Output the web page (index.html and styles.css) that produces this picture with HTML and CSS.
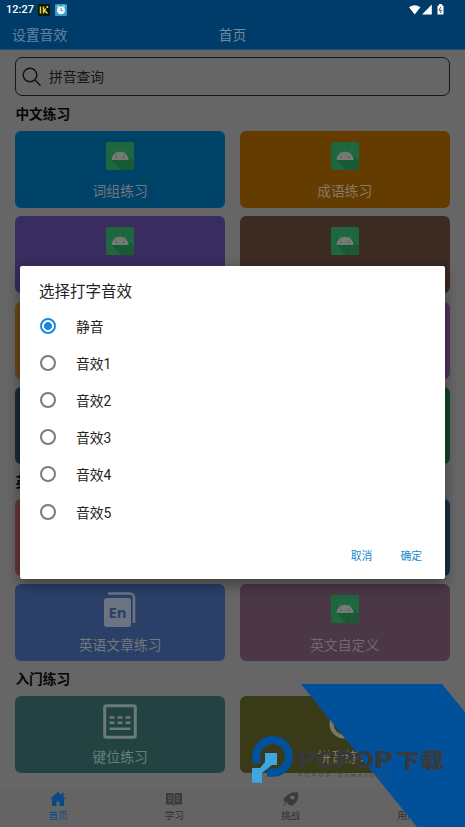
FILE: index.html
```html
<!DOCTYPE html>
<html lang="zh-CN">
<head>
<meta charset="utf-8">
<title>首页</title>
<link rel="stylesheet" href="styles.css">
</head>
<body>
<svg width="0" height="0" class="defs">
  <symbol id="droid" viewBox="0 0 28 28">
    <rect width="28" height="28" rx="1.5" fill="#1d663e"/>
    <path d="M7 0v28M14 0v28M21 0v28M0 7h28M0 14h28M0 21h28" stroke="#256f47" stroke-width=".4"/>
    <path d="M5.5 18 15 28h13V19.500L21 12z" fill="#17552f" opacity=".65"/>
    <path d="M5.500 18a8.600 8.200 0 0 1 17.200 0z" fill="#747b76"/>
    <path d="m8.500 9 2 3m9.200-3-2 3" stroke="#66736b" stroke-width=".8"/>
    <circle cx="10.300" cy="15" r=".8" fill="#356148"/><circle cx="17.800" cy="15" r=".8" fill="#356148"/>
  </symbol>
</svg>
<div class="screen">
  <header class="header">
    <div class="status">
      <span class="clock">12:27</span>
      <svg class="app" viewBox="0 0 12 12"><rect width="12" height="12" rx="1.500" fill="#111408"/><path d="M2.500 2.500v7M5.500 2.500v7M6 6l3.500 3.500M6.500 6 8 4.500" stroke="#d8d83a" stroke-width="1.500"/><circle cx="9.300" cy="3" r="1" fill="#f0e850"/></svg>
      <svg class="app" viewBox="0 0 12 12"><rect width="12" height="12" rx="1" fill="#3a9bcb"/><circle cx="6" cy="6.300" r="4" fill="#eef8fc"/><path d="m2 3 2-1.500M10 3 8 1.500" stroke="#eef8fc"/><path d="M6 4v2.500h2" fill="none" stroke="#3a9bcb" stroke-width=".9"/></svg>
      <svg class="signals" viewBox="0 0 36 12"><path d="M0 3.200Q5.700-.8 11.400 3.200L5.700 10.500zM22.800.5v10H13zM28.500 1.500h1.500V0h3v1.500h1.500v9h-6z" fill="#fff"/><path d="m31.700 3-1.500 3.300h2.500L31.200 9" fill="none" stroke="#27445a" stroke-width=".9"/></svg>
    </div>
    <div class="toolbar"><span class="sound">设置音效</span><span class="title">首页</span></div>
  </header>
  <main class="content">
    <div class="search">
      <svg viewBox="0 0 20 20"><circle cx="8" cy="8" r="6.800"/><path d="m13 13 5.500 5.700"/></svg>
      <span>拼音查询</span>
    </div>
    <h2>中文练习</h2>
    <div class="grid">
      <div class="card sky"><svg class="droid"><use href="#droid"/></svg><span>词组练习</span></div>
      <div class="card amber"><svg class="droid"><use href="#droid"/></svg><span>成语练习</span></div>
      <div class="card violet"><svg class="droid"><use href="#droid"/></svg></div>
      <div class="card brown"><svg class="droid"><use href="#droid"/></svg></div>
      <div class="card gold"></div>
      <div class="card magenta"></div>
      <div class="card slate"></div>
      <div class="card green"></div>
    </div>
    <h2>英文练习</h2>
    <div class="grid">
      <div class="card red"></div>
      <div class="card navy"></div>
      <div class="card blue low">
        <svg class="glyph" viewBox="0 0 34 36"><path d="M5 1.500h22a4 4 0 0 1 4 4V31" fill="none" stroke="#6c7482" stroke-width="2.600"/><rect x="1" y="6" width="27" height="29" rx="3" fill="#6c7482"/><text x="14.500" y="26" text-anchor="middle" class="en">En</text></svg>
        <span>英语文章练习</span></div>
      <div class="card mauve low"><svg class="droid"><use href="#droid"/></svg><span>英文自定义</span></div>
    </div>
    <h2 class="last">入门练习</h2>
    <div class="grid">
      <div class="card teal low">
        <svg class="glyph" viewBox="0 0 34 36"><rect x="1.700" y="1.700" width="30.600" height="31.600" rx="1.500" fill="none" stroke="#6b7b79" stroke-width="3"/><path d="M6.500 13.500h5m3 0h5m3 0h5M6.500 18.800h5m3 0h5m3 0h5M6.500 24.800h21" stroke="#6b7b79" stroke-width="2.400"/></svg>
        <span>键位练习</span></div>
      <div class="card olive low">
        <svg class="glyph" viewBox="0 0 34 36"><circle cx="16" cy="20" r="12.500" fill="none" stroke="#77776b" stroke-width="4"/></svg>
        <span>拼音练习</span></div>
    </div>
  </main>
  <nav class="tabs">
    <div class="tab active"><svg viewBox="0 0 16 14"><path d="M8 0 0 7h2v7h4.500V9.500h3V14H14V7h2l-2.300-2V1h-2v2.200z"/></svg><span>首页</span></div>
    <div class="tab"><svg viewBox="0 0 16 14"><path d="M0 1h6.500L8 2l1.500-1H16v11.500H9.500L8 14l-1.500-1.500H0z"/><path d="M8 2v11M2 4h4M2 6.500h4M2 9h4m4-5h4m-4 2.500h4M10 9h4" stroke="#696969" stroke-width=".8"/></svg><span>学习</span></div>
    <div class="tab"><svg viewBox="0 0 16 14"><path d="M15 .5 9.500.2 5 2.500.5 6.500l.8 3.500 2.700.3 2.500 3 3.500.2 4-4.500L15.500 5z"/><circle cx="9.500" cy="5.500" r="2.100" fill="#696969"/><path d="M2.500 10.500 0 13m4-1.500-2 2.500" stroke="#3b3b3b" stroke-width=".8"/></svg><span>挑战</span></div>
    <div class="tab"><svg viewBox="0 0 16 14"></svg><span>用户</span></div>
  </nav>
  <section class="dialog">
    <h1>选择打字音效</h1>
    <div class="option"><i class="radio on"></i>静音</div>
    <div class="option"><i class="radio"></i>音效1</div>
    <div class="option"><i class="radio"></i>音效2</div>
    <div class="option"><i class="radio"></i>音效3</div>
    <div class="option"><i class="radio"></i>音效4</div>
    <div class="option"><i class="radio"></i>音效5</div>
    <div class="actions"><span>取消</span><span>确定</span></div>
  </section>
  <svg class="watermark" viewBox="0 0 215 147">
    <path d="M51 4h141l23 28v115h-48z" fill="#00519a"/>
    <path d="M6.300 83.500V76a16.300 16.300 0 1 1 16.300 16.700H17" fill="none" stroke="#00519a" stroke-width="8.200"/>
    <path d="M15 73h12v12h-5l-10 8v9.700H2V88h8l5-6z" fill="#3ea7e2"/>
    <text x="47.500" y="88" class="brand" textLength="96" lengthAdjust="spacingAndGlyphs">PCPOP</text>
    <text x="146" y="87.500" class="brand zh" textLength="48" lengthAdjust="spacingAndGlyphs">下载</text>
    <text x="48" y="97" class="sub" textLength="88">PCPOP Download</text>
  </svg>
</div>
</body>
</html>
```
FILE: styles.css
```css
* { box-sizing: border-box; }
body { margin: 0; font-family: Roboto, "Noto Sans CJK SC", sans-serif; color: #111; }
.defs { position: absolute; }
.screen { position: relative; width: 465px; height: 827px; overflow: hidden; background: #666; display: flex; flex-direction: column; }
.header { height: 50px; flex: none; background: #003c69; border-bottom: 1px solid #25506f; }
.status { height: 19px; display: flex; align-items: center; padding: 0 20px 0 6px; }
.clock { color: #fff; font-size: 11px; font-weight: 500; width: 32px; line-height: 19px; }
.app { width: 12px; height: 12px; margin-right: 5px; }
.signals { width: 36px; height: 12px; margin: 0 0 0 auto; }
.toolbar { display: grid; grid-template-columns: 1fr auto 1fr; height: 30px; align-items: center; padding: 0 12px; font-size: 13.8px; color: #66839b; }
.title { color: #74899a; }
.content { flex: 1; padding: 7px 15.5px 0 15.4px; }
.search { height: 39px; border: 1.5px solid #161616; border-radius: 7px; display: flex; align-items: center; padding-left: 6px; gap: 6.5px; font-size: 13.8px; color: #161616; }
.search span { margin-top: -2px; }
.search svg { width: 20px; height: 20px; fill: none; stroke: #111; stroke-width: 1.4; }
h2 { margin: 0; height: 35px; padding-top: 1px; line-height: 34px; font-size: 13.7px; font-weight: 700; color: #050505; }
.grid { display: grid; grid-template-columns: 1fr 1fr; column-gap: 15px; row-gap: 8.3px; }
.card { height: 77px; border-radius: 6px; display: flex; flex-direction: column; align-items: center; padding-top: 11px; font-size: 13.8px; }
.card span { line-height: 20px; margin-top: 11px; color: #73787b; }
.low { padding-top: 8px; }
.low .droid { margin-top: 3px; }
.low span { margin-top: 7px; }
.low .droid + span { margin-top: 12px; }
.droid { width: 28px; height: 28px; flex: none; }
.glyph { width: 34px; height: 36px; flex: none; }
.en { font: 700 15px "Noto Sans", sans-serif; fill: #2a4068; }
.sky { background: #004368; }
.amber { background: #653c00; }
.violet { background: #392c5f; }
.brown { background: #3b2b22; }
.gold { background: #694819; }
.magenta { background: #54305f; }
.slate { background: #1d2a38; }
.green { background: #104625; }
.red { background: #683639; }
.navy { background: #193047; }
.blue { background: #2a4068; }
.mauve { background: #4b3745; }
.teal { background: #224341; }
.olive { background: #393a18; }
.amber span, .olive span { color: #85796a; }
.mauve span { color: #75666f; }
.teal span { color: #66807d; }
.tabs { height: 39px; flex: none; display: grid; grid-template-columns: repeat(4, 1fr); background: #646464; }
.tab { display: flex; flex-direction: column; align-items: center; padding-top: 4px; font-size: 9.6px; line-height: 14px; color: #303030; }
.tab svg { width: 16px; height: 14px; fill: #3b3b3b; margin-bottom: 3px; }
.active { color: #084b84; }
.active svg { fill: #084b84; }
.dialog { position: absolute; left: 20px; top: 266px; width: 425px; height: 313px; background: #fff; border-radius: 2px; box-shadow: 0 7px 14px rgba(0,0,0,.28), 0 1px 12px rgba(0,0,0,.15); padding: 11px 19px 0 20px; }
h1 { margin: 0 0 0 -1px; font-size: 15.5px; line-height: 30px; font-weight: 400; color: #222; }
.option { height: 37.2px; display: flex; align-items: center; gap: 20px; font-size: 13.8px; color: #222; }
.radio { width: 16px; height: 16px; border: 2px solid #7b7b7b; border-radius: 50%; flex: none; }
.on { border-color: #168be0; background: radial-gradient(circle, #168be0 3.7px, transparent 4.3px); }
.actions { display: flex; justify-content: flex-end; gap: 28px; margin-top: 17px; padding-right: 4px; font-size: 10.8px; line-height: 20px; color: #148ac9; }
.watermark { position: absolute; left: 250px; top: 680px; width: 215px; height: 147px; }
.brand { font: 900 23.5px Roboto, sans-serif; fill: #38393b; }
.zh { font: 900 20px "Noto Sans CJK SC", sans-serif; }
.sub { font: 500 6px Roboto, sans-serif; fill: #4c4c42; }
```
